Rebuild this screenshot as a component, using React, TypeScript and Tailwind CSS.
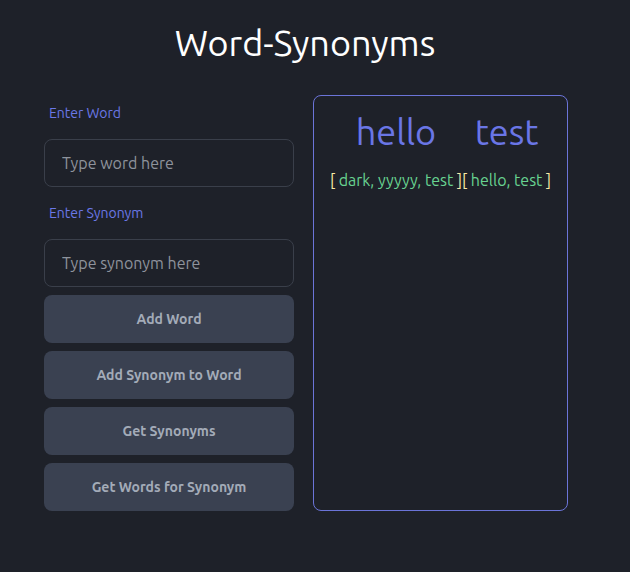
import React from 'react';

const results: { word: string; synonyms: string[] }[] = [
  { word: 'hello', synonyms: ['dark', 'yyyyy', 'test'] },
  { word: 'test', synonyms: ['hello', 'test'] },
];

const buttons = ['Add Word', 'Add Synonym to Word', 'Get Synonyms', 'Get Words for Synonym'];

export default function App() {
  return (
    <div className="min-h-[572px] bg-[#1e2129] font-['Ubuntu','Open_Sans','Noto_Sans',sans-serif] text-white">
      <h1 className="pr-[20px] pt-[23px] text-center text-[36px] leading-[40px] text-white">Word-Synonyms</h1>

      <div className="mt-[32px] flex items-stretch pl-[44px]">
        <div className="flex w-[250px] flex-col pt-[8px]">
          <label className="ml-[5px] text-[14px] leading-[20px] text-[#6b78e6]">Enter Word</label>
          <input
            className="mt-[16px] h-[48px] rounded-lg border border-[#3a3f4a] bg-transparent px-[17px] text-[16px] text-gray-200 placeholder:text-[#8e939c] outline-none"
            placeholder="Type word here"
          />
          <label className="ml-[5px] mt-[16px] text-[14px] leading-[20px] text-[#6b78e6]">Enter Synonym</label>
          <input
            className="mt-[16px] h-[48px] rounded-lg border border-[#3a3f4a] bg-transparent px-[17px] text-[16px] text-gray-200 placeholder:text-[#8e939c] outline-none"
            placeholder="Type synonym here"
          />
          <div className="mt-[8px] flex flex-col gap-[8px]">
            {buttons.map((b) => (
              <button
                key={b}
                className="h-[48px] rounded-lg bg-[#3a4151] text-[14px] font-bold text-[#a3abb8]"
              >
                {b}
              </button>
            ))}
          </div>
        </div>

        <div className="ml-[19px] flex w-[255px] justify-center rounded-lg border border-[#6b74d8] pt-[16px]">
          {results.map((r) => (
            <div key={r.word} className="flex flex-col items-center">
              <h2 className="text-[36px] leading-[40px] text-[#6a76e6]">{r.word}</h2>
              <p className="mt-[16px] text-[16px] leading-[24px]">
                <span className="text-[#f7eaa6]">[ </span>
                <span className="text-[#68d391]">{r.synonyms.join(', ')}</span>
                <span className="text-[#f7eaa6]"> ]</span>
              </p>
            </div>
          ))}
        </div>
      </div>
    </div>
  );
}
